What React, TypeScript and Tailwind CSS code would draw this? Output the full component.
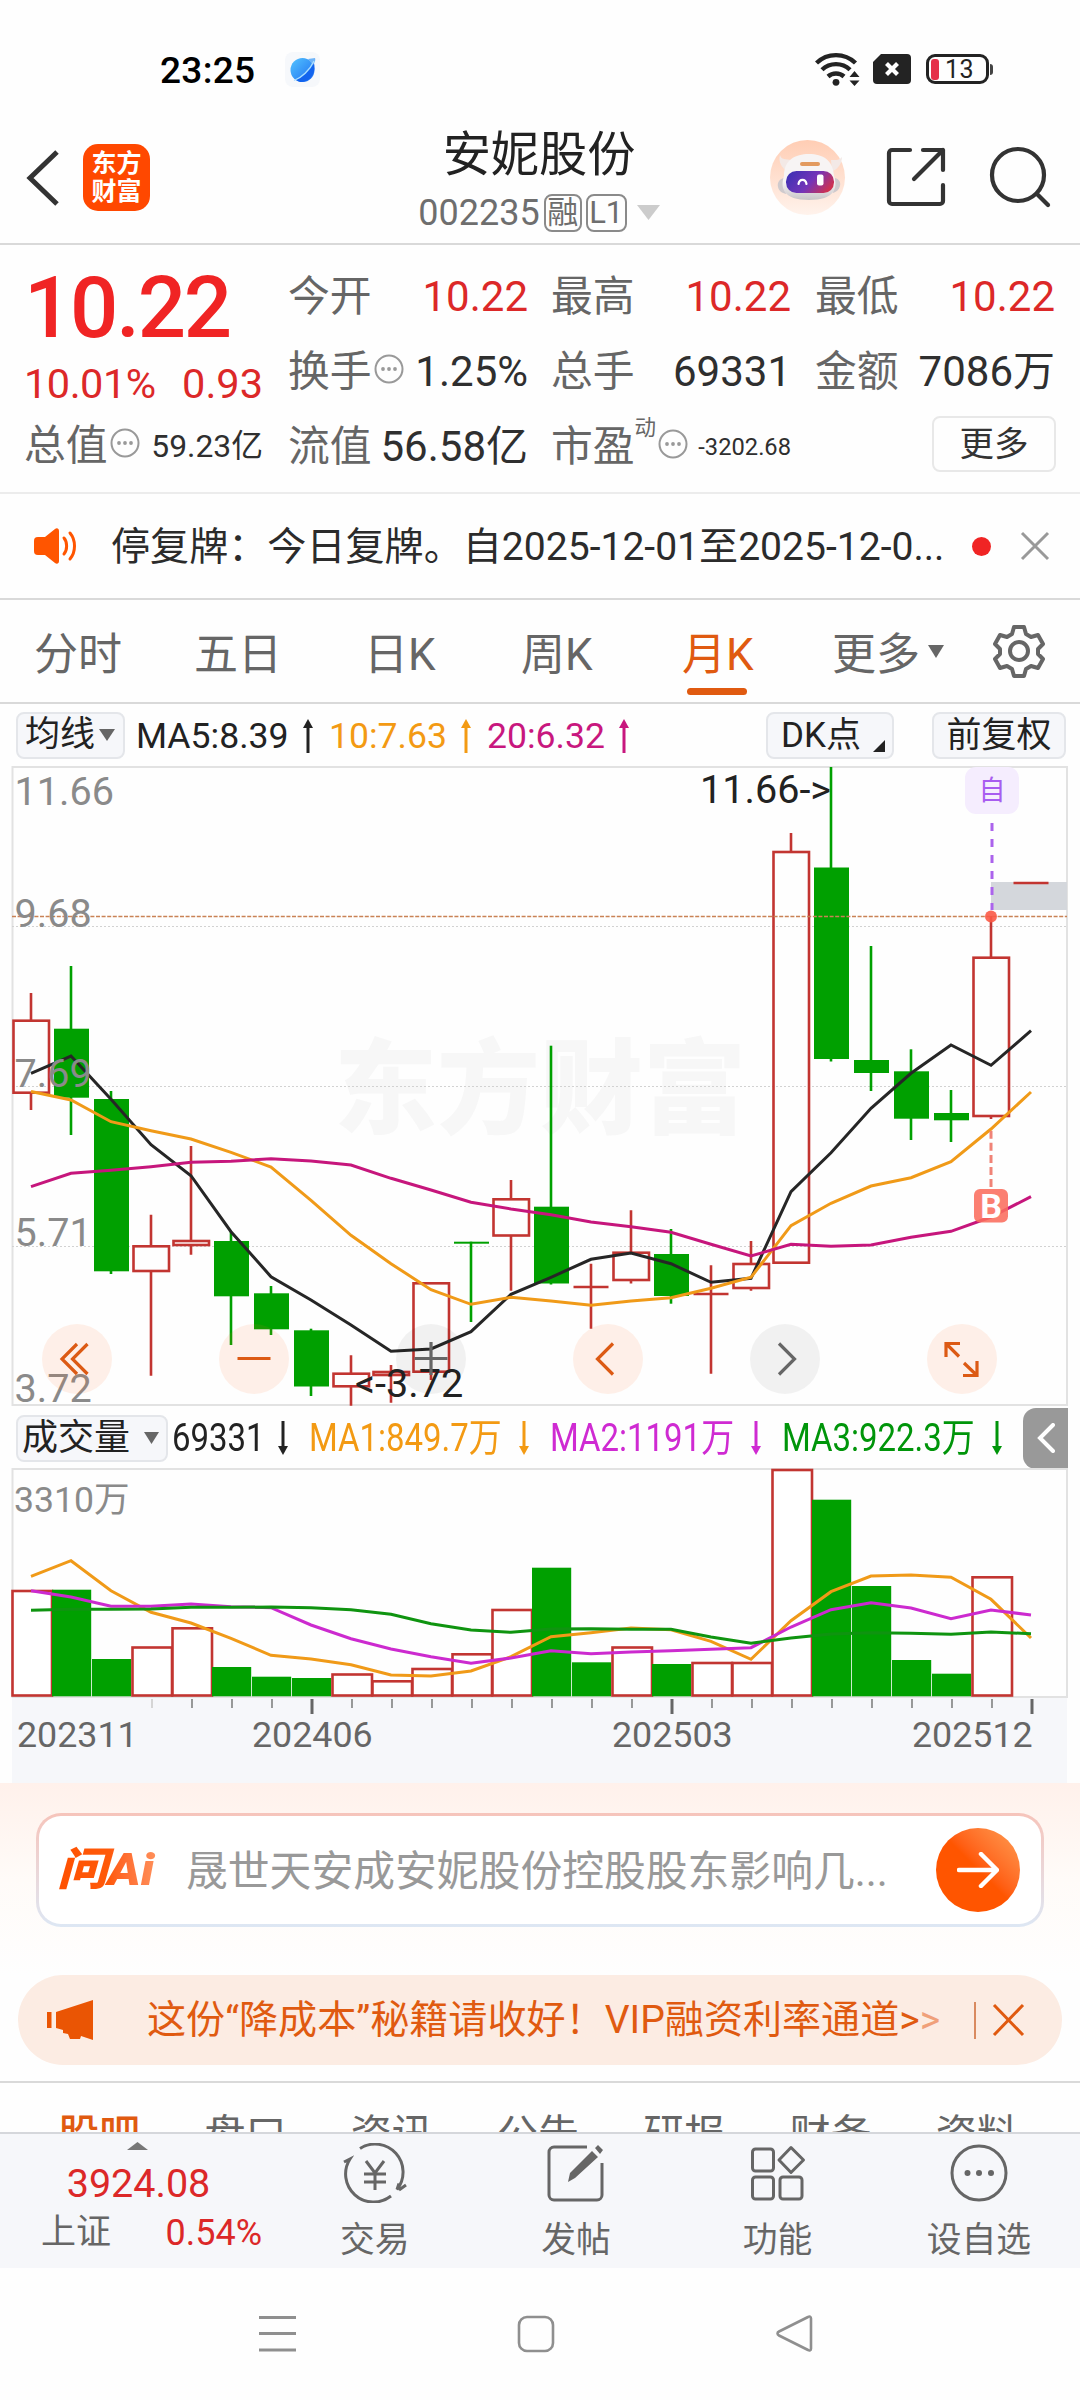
import React from "react";

type Candle = { up: boolean; top: number; bottom: number; high: number; low: number };

const c = (up: boolean, top: number, bottom: number, high: number, low: number): Candle => ({ up, top, bottom, high, low });

const candles: Candle[] = [
  c(true, 1020.7, 1092.7, 993, 1110),
  c(false, 1028.7, 1097.7, 966, 1135),
  c(false, 1099, 1271.3, 1091, 1274),
  c(true, 1246.3, 1271, 1214.7, 1375.7),
  c(true, 1241, 1245, 1146, 1254.7),
  c(false, 1241, 1296.3, 1232, 1345),
  c(false, 1293.3, 1329.3, 1286, 1335),
  c(false, 1330.3, 1386.5, 1328.7, 1396),
  c(true, 1373.7, 1386.3, 1355.3, 1405.7),
  c(true, 1372, 1375, 1365, 1402.7),
  c(true, 1283.3, 1371.7, 1282, 1380),
  c(false, 1241.7, 1243.7, 1241.7, 1322),
  c(true, 1199.3, 1235.5, 1180, 1290.7),
  c(false, 1206.7, 1283.5, 1045.7, 1284.5),
  c(true, 1287, 1287, 1263.7, 1328.7),
  c(true, 1252.7, 1280, 1210.3, 1283.5),
  c(false, 1254, 1296, 1229, 1303.7),
  c(true, 1294, 1294, 1265.3, 1373.7),
  c(true, 1264, 1288, 1241, 1290.7),
  c(true, 852, 1262.7, 833, 1262),
  c(false, 867.5, 1059, 767, 1061.5),
  c(false, 1060, 1073, 946, 1091),
  c(false, 1071.3, 1118.7, 1049.3, 1140),
  c(false, 1113, 1120.3, 1090, 1142),
  c(true, 957.7, 1116, 916, 1119),
  c(true, 883, 883, 883, 883),
];

const ma5 = [1073.3, 1056, 1099.3, 1144.7, 1175.7, 1231.7, 1276.7, 1300, 1325, 1351.3, 1349, 1331.7, 1294.3, 1277.3, 1259.3, 1253, 1263.7, 1282.3, 1278.3, 1191.7, 1152.7, 1108.3, 1073.3, 1045, 1065.3, 1030.7];
const ma10 = [1091.5, 1100, 1121.7, 1130.7, 1139, 1152.3, 1167, 1200.3, 1235.3, 1263.7, 1289.7, 1304.3, 1297.3, 1301, 1305.3, 1301, 1297.7, 1288.3, 1277.3, 1225.7, 1203.3, 1186, 1177.7, 1161.7, 1129, 1092];
const ma20 = [1186.7, 1173.3, 1170.3, 1166.7, 1162.3, 1161.3, 1158.7, 1161, 1165, 1178.3, 1190, 1202.3, 1209, 1214.7, 1222, 1226.7, 1232.3, 1244.3, 1256, 1244.3, 1246.3, 1245, 1237.3, 1231.3, 1217, 1196.7];

const volumes: [boolean, number][] = [
  [true, 1591], [false, 1589.7], [false, 1659], [true, 1647.5], [true, 1628.3], [false, 1667], [false, 1676.7],
  [false, 1678], [true, 1674.5], [true, 1681.3], [true, 1669], [true, 1654.3], [true, 1610], [false, 1567.7],
  [false, 1662.3], [true, 1647.5], [false, 1664], [true, 1663], [true, 1663], [true, 1470], [false, 1499.7],
  [false, 1586], [false, 1660], [false, 1673.7], [true, 1577.3], [true, 1695.5],
];
const v1 = [1576.3, 1560.7, 1590.7, 1612.3, 1623, 1638.3, 1655.3, 1659, 1664.7, 1675, 1676, 1671, 1656.7, 1636.7, 1632.7, 1628, 1629.7, 1641.3, 1659.3, 1620.7, 1591.7, 1576, 1575, 1577.3, 1599.3, 1638];
const v2 = [1590.7, 1597, 1606.3, 1606.3, 1604, 1606.7, 1607.7, 1625, 1638.7, 1649, 1656.7, 1663.3, 1658, 1650.7, 1653.7, 1652, 1650.7, 1649.3, 1647.7, 1627, 1609.7, 1602.7, 1608, 1618.7, 1610, 1615];
const v3 = [1610.3, 1609.3, 1609.3, 1609, 1607.3, 1607.3, 1607, 1607.7, 1609.7, 1614.3, 1623.7, 1630, 1632.3, 1629, 1628.7, 1629.3, 1629.3, 1637, 1643.3, 1638, 1634, 1632.7, 1633.3, 1634.3, 1632, 1633.7];

const line = (ys: number[]) => ys.map((y, i) => `${31 + 40 * i},${y}`).join(" ");

const RED = "#c23531";
const GREEN = "#00a000";

function StatusBar() {
  return (
    <div className="flex h-[118px] items-start pl-[160px] pr-[87px] pt-[49px]">
      <span className="mt-[2px] text-[37px] font-medium leading-[40px] tracking-[0.3px] text-black">23:25</span>
      <span className="ml-[30px] mt-[3px] flex h-[35px] w-[35px] items-center justify-center rounded-lg bg-[#f6f8fb]">
        <svg width="28" height="28" viewBox="0 0 28 28">
          <defs>
            <linearGradient id="planet" x1="0" y1="0" x2="1" y2="1">
              <stop offset="0" stopColor="#53c4ff" />
              <stop offset="1" stopColor="#1d6cf0" />
            </linearGradient>
          </defs>
          <circle cx="13.500" cy="14" r="12" fill="url(#planet)" />
          <path d="M19 3l7-1c1 3-1 5-2 7z" fill="#6fb4f8" />
          <path d="M7 24C14 21 21 15 25 7c2 8-2 16-8 18-4 2-7 1-10-1z" fill="#1263ee" />
          <path d="M5 24.500C12 22 21 14 25 5" stroke="#a9ddff" strokeWidth="1.300" fill="none" />
        </svg>
      </span>
      <div className="ml-auto flex items-center gap-[13px] pt-[2px]">
        <svg width="45" height="36" viewBox="0 0 45 36" fill="none" stroke="#232323" strokeWidth="4.400">
          <path d="M1.500 12a28 28 0 0 1 39 0" />
          <path d="M7 18.800a20 20 0 0 1 28 0" />
          <path d="M13 25.500a12 12 0 0 1 16 0" />
          <circle cx="21" cy="31.300" r="3.400" fill="#232323" stroke="none" />
          <path d="M39.500 20l5 6h-10zM39.500 35l5-5.500h-10z" fill="#232323" stroke="none" />
        </svg>
        <svg width="38" height="30" viewBox="0 0 38 30">
          <path d="M8 0h26a4 4 0 0 1 4 4v22a4 4 0 0 1-4 4H4a4 4 0 0 1-4-4V8z" fill="#232323" />
          <path d="M13.500 9.500l11 11M24.500 9.500l-11 11" stroke="#fff" strokeWidth="4.200" />
        </svg>
        <div className="ml-[2px] flex items-center">
          <span className="flex h-[30px] w-[63px] items-center rounded-[9px] border-[3px] border-[#232323] pl-[2px]">
            <span className="h-[21px] w-[8px] rounded-[3px] bg-[#e5314a]" />
            <span className="ml-[6px] text-[25px] leading-none tracking-[0.5px] text-[#232323]">13</span>
          </span>
          <span className="ml-px h-[11px] w-[3px] rounded-r bg-[#444]" />
        </div>
      </div>
    </div>
  );
}

function Header() {
  return (
    <div className="flex h-[127px] items-start border-b-2 border-[#d9d9d9] pl-[26px]">
      <svg className="mt-[32px]" width="34" height="56" viewBox="0 0 34 56" fill="none" stroke="#333" strokeWidth="5">
        <path d="M31 2L4 28l27 26" />
      </svg>
      <div className="ml-[23px] mt-[26px] flex h-[67px] w-[67px] flex-col items-center justify-center rounded-[15px] bg-[#ff4800] font-bold text-white">
        <span className="text-[25px] leading-[28px]">东方</span>
        <span className="text-[25px] leading-[28px]">财富</span>
      </div>
      <div className="ml-[229px] flex w-[320px] flex-col items-center">
        <div className="mt-[7px] text-[48.200px] leading-[60px] text-[#222]">安妮股份</div>
        <div className="mt-[6px] flex items-center text-[36px] leading-[40px] text-[#6e6e6e]">
          <span className="pt-[2px]">002235</span>
          <span className="ml-[4px] mt-px flex h-[38px] w-[38px] items-center justify-center rounded-[8px] border-2 border-[#8a8a8a] text-[31px] leading-none">融</span>
          <span className="ml-[4px] mt-px flex h-[38px] w-[41px] items-center justify-center rounded-[8px] border-2 border-[#8a8a8a] text-[31px] leading-none">L1</span>
          <svg className="ml-[10px]" width="23" height="15" viewBox="0 0 23 15"><path d="M0 0h23L11.500 15z" fill="#ccc" /></svg>
        </div>
      </div>
      <svg className="ml-[71px] mt-[22px]" width="76" height="76" viewBox="0 0 76 76">
        <defs>
          <linearGradient id="halo" x1="0" y1="0" x2="0" y2="1">
            <stop offset="0" stopColor="#ffcdb4" />
            <stop offset="1" stopColor="#fff3ec" />
          </linearGradient>
          <linearGradient id="shell" x1="0" y1="0" x2="0" y2="1">
            <stop offset="0.600" stopColor="#f7f4f4" />
            <stop offset="1" stopColor="#c9c5c8" />
          </linearGradient>
          <linearGradient id="visor" x1="0" y1="0.200" x2="1" y2="0.600">
            <stop offset="0" stopColor="#3d31b4" />
            <stop offset="0.550" stopColor="#7434b8" />
            <stop offset="1" stopColor="#cf3150" />
          </linearGradient>
        </defs>
        <circle cx="37.500" cy="37.500" r="37.500" fill="url(#halo)" />
        <path d="M10 15c1 5 6 4 11 5l-4 11c-5-3-9-9-7-16zM72 17c-3 4-7 3-11 3l1 11c5-1 10-7 10-14z" fill="#f3e9e6" />
        <path d="M14 38c-5 1-7 5-6 9s4 6 8 7zM65 38c4 1 6 4 5 8s-4 6-7 7z" fill="#cfcacd" />
        <path d="M14 36c0-16 11-22 25-22s24 6 25 22c4 12 1 24-25 24S10 48 14 36z" fill="url(#shell)" />
        <rect x="30" y="22" width="20" height="4" rx="2" fill="#e39a5f" />
        <rect x="16" y="31" width="48" height="22" rx="10.500" fill="url(#visor)" />
        <path d="M28.500 44c1-5.500 7-5.500 8 0" stroke="#fff" strokeWidth="2.200" fill="none" strokeLinecap="round" />
        <rect x="47" y="34.500" width="6.500" height="11" rx="2" fill="#fff" />
      </svg>
      <svg className="ml-[40px] mt-[29px]" width="60" height="60" viewBox="0 0 60 60" fill="none" stroke="#333" strokeWidth="4.200" strokeLinecap="round" strokeLinejoin="round">
        <path d="M24 3H6a3 3 0 0 0-3 3v48a3 3 0 0 0 3 3h48a3 3 0 0 0 3-3V38" />
        <path d="M37 3h20v20M57 3L28 32" />
      </svg>
      <svg className="ml-[43px] mt-[28px]" width="62" height="62" viewBox="0 0 62 62" fill="none" stroke="#333" strokeWidth="4.200">
        <circle cx="29" cy="29" r="26" />
        <path d="M48 48L59 59" strokeLinecap="round" />
      </svg>
    </div>
  );
}

function Info({ className = "" }: { className?: string }) {
  return (
    <svg className={"shrink-0 " + className} width="30" height="30" viewBox="0 0 30 30">
      <circle cx="15" cy="15" r="13.500" fill="none" stroke="#999" strokeWidth="2" />
      <circle cx="9" cy="15" r="1.900" fill="#999" />
      <circle cx="15" cy="15" r="1.900" fill="#999" />
      <circle cx="21" cy="15" r="1.900" fill="#999" />
    </svg>
  );
}

function Quote({ label, value, red, info, small, sup }: { label: string; value: string; red?: boolean; info?: boolean; small?: string; sup?: string }) {
  return (
    <div className="flex h-[75px] items-center justify-between whitespace-nowrap">
      <span className="-ml-px flex items-center text-[41.800px] leading-[48px] text-[#666]">
        {label}
        {sup && <span className="relative -top-[19px] text-[21.500px] leading-none">{sup}</span>}
        {info && <Info className="relative -top-[3px] ml-[2px]" />}
      </span>
      <span className={(red ? "text-[#dc2828] " : "text-[#2f2f2f] ") + (small ?? "text-[42px]") + " leading-[48px]"}>{value}</span>
    </div>
  );
}

function Quotes() {
  return (
    <div className="flex h-[249px] border-b-2 border-[#ececec]">
      <div className="ml-[25px] w-[238px]">
        <div className="-ml-px mt-[18px] text-[85px] font-medium leading-[90px] tracking-[-2.200px] text-[#f02424]">10.22</div>
        <div className="-ml-px mt-[7px] flex justify-between text-[41.500px] leading-[48px] text-[#dc2828]">
          <span className="tracking-[-0.500px]">10.01%</span>
          <span>0.93</span>
        </div>
        <Quote label="总值" value="59.23亿" info small="text-[31.800px]" />
      </div>
      <div className="ml-[26px] mt-[14px] w-[239px]">
        <Quote label="今开" value="10.22" red />
        <Quote label="换手" value="1.25%" info />
        <Quote label="流值" value="56.58亿" />
      </div>
      <div className="ml-[24px] mt-[14px] w-[239px]">
        <Quote label="最高" value="10.22" red />
        <Quote label="总手" value="69331" />
        <Quote label="市盈" value="-3202.68" sup="动" info small="text-[23.700px]" />
      </div>
      <div className="ml-[25px] mt-[14px] w-[239px]">
        <Quote label="最低" value="10.22" red />
        <Quote label="金额" value="7086万" />
        <button className="ml-[116px] mt-[7px] flex h-[56px] w-[124px] items-center justify-center rounded-[8px] border-2 border-[#e8e8e8] text-[34.500px] leading-none text-[#333]">更多</button>
      </div>
    </div>
  );
}

function Notice() {
  return (
    <div className="flex h-[106px] items-center border-b-2 border-[#d9d9d9]">
      <svg className="ml-[33px]" width="46" height="38" viewBox="0 0 46 38">
        <path d="M5 10h7L22 2c2-1.500 4-.5 4 2v30c0 2.500-2 3.500-4 2l-10-8H5c-3 0-4-1.500-4-4V14c0-2.500 1-4 4-4z" fill="#ff5500" />
        <path d="M31 11c3.500 4 3.500 12 0 16M37 6c6 7 6 19 0 26" stroke="#ff5500" strokeWidth="3" fill="none" strokeLinecap="round" />
      </svg>
      <span className="ml-[32px] mt-[2px] w-[851px] whitespace-nowrap text-[39.100px] leading-[50px] text-[#2b2b2b]">停复牌：今日复牌。自2025-12-01至2025-12-0...</span>
      <span className="ml-[10px] h-[19px] w-[19px] rounded-full bg-[#f02424]" />
      <svg className="ml-[29px]" width="30" height="30" viewBox="0 0 30 30" stroke="#999" strokeWidth="3"><path d="M2 2l26 26M28 2L2 28" /></svg>
    </div>
  );
}

function Tabs() {
  return (
    <div className="flex h-[104px] items-center border-b-2 border-[#d9d9d9] text-[44px] leading-[56px] text-[#666]">
      <span className="ml-[34px] mt-[7px] w-[160px]">分时</span>
      <span className="mt-[7px] w-[170px]">五日</span>
      <span className="mt-[7px] w-[157px]">日K</span>
      <span className="mt-[7px] w-[161px]">周K</span>
      <span className="relative mt-[7px] w-[150px] text-[#e05a10]">
        月K
        <span className="absolute left-[5px] top-[61px] h-[7px] w-[60px] rounded-full bg-[#e05a10]" />
      </span>
      <span className="mt-[7px] w-[90px]">更多</span>
      <svg className="ml-[6px]" width="16" height="13" viewBox="0 0 16 13"><path d="M0 0h16L8 13z" fill="#666" /></svg>
      <svg className="ml-[48px]" width="54" height="54" viewBox="0 0 54 54" fill="none" stroke="#666" strokeWidth="4" strokeLinejoin="round">
        <path d="M22 3h10l2 7 5 3 7-2 5 9-5 5v5l5 5-5 9-7-2-5 3-2 7H22l-2-7-5-3-7 2-5-9 5-5v-5l-5-5 5-9 7 2 5-3z" />
        <circle cx="27" cy="27" r="9" />
      </svg>
    </div>
  );
}

function Arrow({ color, down, className = "" }: { color: string; down?: boolean; className?: string }) {
  return (
    <svg className={"shrink-0 " + className + (down ? " rotate-180" : "")} width="12" height="34" viewBox="0 0 12 34">
      <path d="M6 4v30" stroke={color} strokeWidth="3" />
      <path d="M6 0l5 9H1z" fill={color} />
    </svg>
  );
}

function MaBar() {
  return (
    <div className="flex h-[60px] items-center whitespace-nowrap text-[35.600px] leading-[40px]">
      <button className="ml-[16px] mt-[2px] flex h-[47px] w-[109px] items-center rounded-[8px] border-2 border-[#e4e6ea] bg-[#f6f7fa] pl-[7px] text-[35px] text-[#222]">
        均线
        <svg className="ml-[4px]" width="16" height="12" viewBox="0 0 16 12"><path d="M0 0h16L8 12z" fill="#666" /></svg>
      </button>
      <span className="ml-[11px] mt-[4px] w-[166px] text-[#222]">MA5:8.39</span>
      <Arrow className="mt-[4px]" color="#222" />
      <span className="ml-[15px] mt-[4px] w-[130px] text-[#f39a13]">10:7.63</span>
      <Arrow color="#f39a13" className="ml-px mt-[4px]" />
      <span className="ml-[15px] mt-[4px] w-[131px] text-[#c8177e]">20:6.32</span>
      <Arrow className="mt-[4px]" color="#c8177e" />
      <button className="ml-[136px] mt-[3px] flex h-[47px] w-[128px] items-center rounded-[8px] border-2 border-[#e4e6ea] bg-[#f6f7fa] pl-[13px] text-[35px] text-[#222]">
        DK点
        <svg className="ml-[12px] mt-[20px]" width="12" height="12" viewBox="0 0 12 12"><path d="M12 0v12H0z" fill="#222" /></svg>
      </button>
      <button className="ml-[38px] mt-[3px] flex h-[47px] w-[134px] items-center justify-center rounded-[8px] border-2 border-[#e4e6ea] bg-[#f6f7fa] text-[35px] text-[#222]">前复权</button>
    </div>
  );
}

const controls: { grey?: boolean; d: string }[] = [
  { d: "M35 20L20 35l15 15M45.500 20L30.500 35l15 15" },
  { d: "M18.500 34.500h33" },
  { grey: true, d: "M18.500 34.500h33M35 18v33" },
  { d: "M40 19.500L24.500 35L40 50.500" },
  { grey: true, d: "M29 19.500L44.500 35L29 50.500" },
  { d: "M19 33V19.500h14M20 20.500l12 12M37 39l12.500 12M36 51.500h14V37" },
];

function KChart() {
  return (
    <div className="relative">
      <svg className="block" width="1080" height="644" viewBox="0 764 1080 644" fontFamily="Roboto, 'Noto Sans CJK SC', sans-serif">
        <text x="334" y="1126" fontSize="103" fontWeight="900" fill="#f7f7f7">东方财富</text>
        <rect x="12.500" y="767" width="1054.500" height="638" fill="none" stroke="#e2e2e2" strokeWidth="2" />
        {[926.5, 1086.5, 1246.5].map((y) => (
          <path key={y} d={`M12 ${y}H1067`} stroke="#d2d2d2" strokeWidth="1" strokeDasharray="2 2" />
        ))}
        <rect x="991" y="882" width="76" height="28" fill="#d4d7dc" />
        {candles.map((k, i) => {
          const x = 31 + 40 * i;
          const flat = k.bottom - k.top < 0.5;
          if (flat)
            return (
              <g key={i} stroke={RED} strokeWidth="2.600">
                <path d={`M${x - 17.5} ${k.top}h35M${x} ${k.high}V${k.low}`} />
              </g>
            );
          if (k.up)
            return (
              <g key={i} stroke={RED} strokeWidth="2.600" fill="none">
                <path d={`M${x} ${k.high}V${k.top}M${x} ${k.bottom}V${Math.max(k.low, k.bottom)}`} />
                <rect x={x - 17.5} y={k.top} width="35.500" height={k.bottom - k.top} />
              </g>
            );
          return (
            <g key={i}>
              <path d={`M${x} ${k.high}V${k.low}`} stroke={GREEN} strokeWidth="2.600" />
              <rect x={x - 17} y={k.top} width="35" height={k.bottom - k.top} fill={GREEN} />
            </g>
          );
        })}
        <path d="M12 916.500H1067" stroke="#c98255" strokeWidth="1.400" strokeDasharray="4 1.600" />
        <g fill="none" strokeWidth="3">
          <polyline points={line(ma5)} stroke="#262626" />
          <polyline points={line(ma10)} stroke="#f09a18" />
          <polyline points={line(ma20)} stroke="#c6167c" />
        </g>
        <path d="M992 823V910" stroke="#ab63ec" strokeWidth="3" strokeDasharray="8 8" />
        <circle cx="991" cy="916.500" r="6" fill="#fb5a46" opacity="0.900" />
        <path d="M991 1130.700V1188" stroke="#f08377" strokeWidth="3" strokeDasharray="8 4.100" />
        <rect x="974" y="1189" width="34" height="33.500" rx="6" fill="#fb6d5d" opacity="0.880" />
        <text x="991" y="1217.500" fontSize="34" fontWeight="700" fill="#fff" textAnchor="middle">B</text>
        <rect x="965" y="767" width="54" height="47" rx="11" fill="#f5edfe" />
        <text x="992" y="800" fontSize="27" fill="#a85cf0" textAnchor="middle">自</text>
        <g fontSize="39.600" fill="#8a8a8a">
          <text x="14.500" y="805">11.66</text>
          <text x="14.500" y="926.500">9.68</text>
          <text x="14.500" y="1086.500">7.69</text>
          <text x="14.500" y="1245.500">5.71</text>
          <text x="14.500" y="1402">3.72</text>
        </g>
        <g fontSize="39.600" fill="#222">
          <text x="700" y="803">11.66-&gt;</text>
          <text x="355" y="1397">&lt;-3.72</text>
        </g>
      </svg>
      <div className="absolute left-[42px] top-[560px] flex gap-[107px]">
        {controls.map((b, i) => (
          <button key={i} className={"h-[70px] w-[70px] rounded-full " + (b.grey ? "bg-black/5" : "bg-[#ff6a20]/10")}>
            <svg width="70" height="70" viewBox="0 0 70 70" fill="none" stroke={b.grey ? "#666" : "#dc5a14"} strokeWidth="3.200">
              <path d={b.d} />
            </svg>
          </button>
        ))}
      </div>
    </div>
  );
}

function Condensed({ children, className }: { children: React.ReactNode; className: string }) {
  return (
    <span className={"shrink-0 " + className}>
      <span className="inline-block origin-left scale-x-[0.845]">{children}</span>
    </span>
  );
}

function VolumeBar() {
  return (
    <div className="flex h-[60px] items-center whitespace-nowrap text-[39px] leading-[44px]">
      <button className="ml-[16px] flex h-[47px] w-[152px] shrink-0 items-center rounded-[8px] border-2 border-[#e4e6ea] bg-[#f6f7fa] pl-[4px] text-[36px] text-[#222]">
        成交量
        <svg className="ml-[14px]" width="15" height="12" viewBox="0 0 15 12"><path d="M0 0h15L7.500 12z" fill="#666" /></svg>
      </button>
      <Condensed className="ml-[4px] w-[105px] text-[#222]">69331</Condensed>
      <Arrow down color="#222" />
      <Condensed className="ml-[20px] w-[209px] text-[#f39a13]">MA1:849.7万</Condensed>
      <Arrow down color="#f39a13" />
      <Condensed className="ml-[20px] w-[200px] text-[#cf2ad2]">MA2:1191万</Condensed>
      <Arrow down color="#cf2ad2" />
      <Condensed className="ml-[20px] w-[209px] text-[#00950a]">MA3:922.3万</Condensed>
      <Arrow down color="#00950a" />
      <span className="ml-[20px] flex h-[61px] w-[45px] shrink-0 items-center justify-center rounded-l-[13px] bg-[#999]">
        <svg width="18" height="30" viewBox="0 0 18 30" fill="none" stroke="#fff" strokeWidth="4" strokeLinecap="round"><path d="M16 2L3 15l13 13" /></svg>
      </span>
    </div>
  );
}

function VolumeChart() {
  return (
    <svg className="block" width="1080" height="315" viewBox="0 1468 1080 315" fontFamily="Roboto, 'Noto Sans CJK SC', sans-serif">
      <path d="M12.500 1697V1469H1067V1697z" fill="none" stroke="#e2e2e2" strokeWidth="2" />
      <rect x="12" y="1698" width="1055" height="85" fill="#f6f7fa" />
      {volumes.map(([up, top], i) =>
        up ? (
          <rect key={i} x={12.5 + 40 * i} y={top} width="39.500" height={1695.5 - top} fill="#fff" stroke={RED} strokeWidth="2.600" />
        ) : (
          <rect key={i} x={12 + 40 * i} y={top} width="39.200" height={1696.3 - top} fill={GREEN} />
        )
      )}
      <g fill="none" strokeWidth="3">
        <polyline points={line(v1)} stroke="#f09a18" />
        <polyline points={line(v2)} stroke="#cc2acf" />
        <polyline points={line(v3)} stroke="#0f9410" />
      </g>
      <path d="M152 1699v9" stroke="#d5d5d5" strokeWidth="2" />
      {Array.from({ length: 22 }, (_, k) => k + 4).map((i) => {
        const major = i === 7 || i === 16 || i === 25;
        return <path key={i} d={`M${32 + 40 * i} 1699v${major ? 15 : 9}`} stroke={major ? "#666" : "#808080"} strokeWidth={major ? 3 : 1.6} />;
      })}
      <text x="14" y="1512" fontSize="35.600" fill="#8a8a8a">3310万</text>
      <g fontSize="35.800" fill="#666">
        <text x="17" y="1747">202311</text>
        <text x="252" y="1747">202406</text>
        <text x="612" y="1747">202503</text>
        <text x="912" y="1747">202512</text>
      </g>
    </svg>
  );
}

function AskAi() {
  return (
    <div className="h-[192px] bg-gradient-to-b from-[#fff1eb] via-[#fffbf8] to-[#fefefe] px-[36px] pt-[30px]">
      <div className="rounded-[25px] bg-gradient-to-b from-[#f6c4bb] to-[#dde7f4] p-[3px]">
        <div className="flex h-[108px] items-center rounded-[22px] bg-white">
          <span className="ml-[18px] w-[94px] shrink-0 origin-left scale-x-[1.12] bg-gradient-to-r from-[#ff5000] via-[#ff5a0a] to-[#ff9560] bg-clip-text text-[45px] font-black italic leading-[56px] text-transparent">问Ai</span>
          <span className="ml-[35px] mt-[3px] w-[750px] whitespace-nowrap text-[41.800px] leading-[56px] text-[#999]">晟世天安成安妮股份控股股东影响几...</span>
          <span className="flex h-[84px] w-[84px] shrink-0 items-center justify-center rounded-full bg-gradient-to-tr from-[#ff5500] from-50% to-[#ff9d50]">
            <svg width="42" height="36" viewBox="0 0 42 36" fill="none" stroke="#fff" strokeWidth="4.500" strokeLinecap="round" strokeLinejoin="round">
              <path d="M2 18h37M24 2l16 16-16 16" />
            </svg>
          </span>
        </div>
      </div>
    </div>
  );
}

function Promo() {
  return (
    <div className="mx-[18px] flex h-[90px] items-center whitespace-nowrap rounded-full bg-[#fcece3] text-[39.100px] leading-[50px] text-[#e05a10]">
      <svg className="ml-[29px] shrink-0" width="47" height="40" viewBox="0 0 47 40" fill="#ea5504">
        <path d="M0 12h4.500v16H0zM9 12L46 0v40l-12-4-1 3H23l-2-5-5-1v-3l-7-2z" />
      </svg>
      <span className="ml-[53px] w-[799px]">
        这份“降成本”秘籍请收好！VIP融资利率通道&gt;<span className="text-[#f0a07a]">&gt;</span>
      </span>
      <span className="ml-[28px] h-[37px] w-[2px] bg-[#d98a60]" />
      <svg className="ml-[16px]" width="33" height="34" viewBox="0 0 33 34" stroke="#e05a10" strokeWidth="3"><path d="M2 2l29 30M31 2L2 32" /></svg>
    </div>
  );
}

function SectionTabs() {
  const tabs = ["股吧", "盘口", "资讯", "公告", "研报", "财务", "资料"];
  return (
    <div className="mt-[16px] h-[51px] overflow-hidden border-t-2 border-[#d9d9d9]">
      <div className="grid grid-cols-7 pl-[26px] pr-[30px] pt-[24px] text-center text-[41px] leading-[56px] text-[#666]">
        {tabs.map((t, i) => (
          <span key={t} className={i === 0 ? "font-medium text-[#e05a10]" : ""}>{t}</span>
        ))}
      </div>
    </div>
  );
}

function Action({ label, children }: { label: string; children: React.ReactNode }) {
  return (
    <div className="flex w-[201.400px] flex-col items-center">
      <svg className="mt-[9px]" width="66" height="60" viewBox="0 0 66 60" fill="none" stroke="#666" strokeWidth="3">{children}</svg>
      <span className="mt-[15px] text-[34.800px] leading-[44px] text-[#666]">{label}</span>
    </div>
  );
}

function BottomBar() {
  return (
    <div className="flex h-[136px] border-t-2 border-[#d5d7db] bg-[#f6f7fa]">
      <div className="flex w-[274px] flex-col items-center">
        <svg className="mt-[8px]" width="21" height="8" viewBox="0 0 21 8"><path d="M0 8h21L10.500 0z" fill="#777" /></svg>
        <span className="ml-[3px] mt-[11px] text-[39.500px] leading-[46px] text-[#dc2828]">3924.08</span>
        <div className="ml-[29px] mt-[4px] flex w-[221px] items-center justify-between text-[35px] leading-[44px] text-[#666]">
          上证<span className="text-[36px] text-[#dc2828]">0.54%</span>
        </div>
      </div>
      <Action label="交易">
        <path d="M18 5.500a28 28 0 0 1 37 41l2-6M49 53A28 28 0 0 1 8 16l-6 3M57 47l7-5" />
        <path d="M24 18l9 12 9-12M22 31h22M22 39h22M33 30v17" />
      </Action>
      <Action label="发帖">
        <path d="M44 4H11a5 5 0 0 0-5 5v43a5 5 0 0 0 5 5h43a5 5 0 0 0 5-5V20" />
        <path d="M25 39l2-9 22-22 6 6-23 21zM52 5l3-3 5 5-3 4z" fill="#666" stroke="none" />
      </Action>
      <Action label="功能">
        <rect x="8.500" y="6" width="21" height="22" rx="3" />
        <rect x="8.500" y="34" width="21" height="22" rx="3" />
        <rect x="36" y="34" width="22" height="22" rx="3" />
        <path d="M47 4.500L59.500 17 47 29.500 35 17z" strokeLinejoin="round" />
      </Action>
      <Action label="设自选">
        <circle cx="33" cy="30" r="27" />
        <g fill="#666" stroke="none"><circle cx="21.500" cy="30" r="3" /><circle cx="33" cy="30" r="3" /><circle cx="45" cy="30" r="3" /></g>
      </Action>
    </div>
  );
}

function SystemNav() {
  return (
    <div className="flex h-[132px] items-start pl-[259px] pt-[46px]">
      <svg width="37" height="40" viewBox="0 0 37 40" stroke="#8f8f8f" strokeWidth="3"><path d="M0 3.500h37M0 19.500h37M0 36h37" /></svg>
      <svg className="ml-[221px]" width="38" height="40" viewBox="0 0 38 40" fill="none" stroke="#8f8f8f" strokeWidth="2.600"><rect x="2" y="3" width="34" height="34" rx="8" /></svg>
      <svg className="ml-[220px]" width="38" height="40" viewBox="0 0 38 40" fill="none" stroke="#8f8f8f" strokeWidth="2.600"><path d="M36 4.500v30c0 2-1.500 2.500-3 1.500L4 21.500c-2-1-2-3 0-4L33 3c1.500-1 3-.5 3 1.500z" /></svg>
    </div>
  );
}

export default function App() {
  return (
    <div className="h-[2400px] w-[1080px] overflow-hidden bg-[#fefefe] font-[Roboto,'Noto_Sans_CJK_SC',sans-serif]">
      <StatusBar />
      <Header />
      <Quotes />
      <Notice />
      <Tabs />
      <MaBar />
      <KChart />
      <VolumeBar />
      <VolumeChart />
      <AskAi />
      <Promo />
      <SectionTabs />
      <BottomBar />
      <SystemNav />
    </div>
  );
}
